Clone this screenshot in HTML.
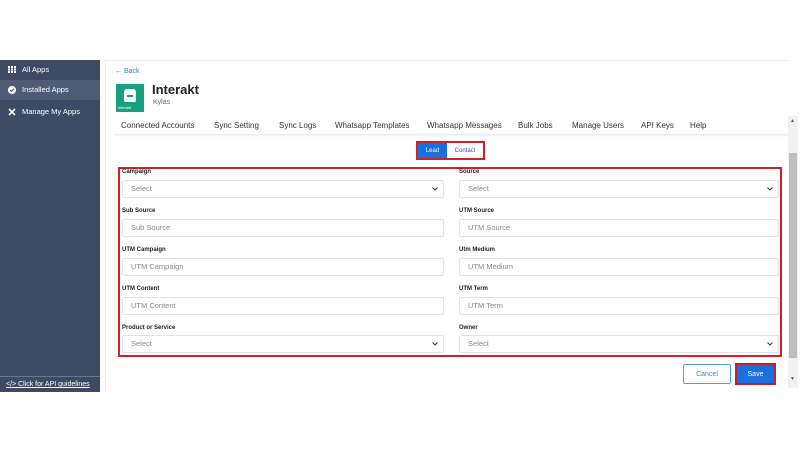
<!DOCTYPE html>
<html><head><style>
*{box-sizing:border-box;margin:0;padding:0}
body{width:800px;height:450px;background:#fff;position:relative;font-family:"Liberation Sans",sans-serif;overflow:hidden}
.a{position:absolute}
.side{left:0;top:60px;width:100px;height:332px;background:#3e4a64}
.si{position:absolute;left:0;width:100px;height:20px;color:#fff;font-size:7.5px;padding-left:22px;line-height:20px}
.si svg{position:absolute;left:8px;top:6px}
.main{left:105px;top:60px;width:683px;height:332px;border-left:1px solid #eee;border-top:1px solid #eee}
.tab{position:absolute;top:121px;font-size:8px;color:#333}
.lbl{position:absolute;font-size:6px;font-weight:bold;color:#222}
.inp{position:absolute;height:18px;border:1px solid #e3e3e3;border-radius:2px;font-size:7.5px;color:#888;padding-left:8px;line-height:16px;background:#fff}
.chev{position:absolute;right:5px;top:6px;width:6px;height:4px}
.btn{display:flex;align-items:center;justify-content:center}
</style></head><body>
<div class="a side">
 <div class="si" style="top:0"><svg width="8" height="7"><g fill="#fff"><rect x="0" y="0" width="2" height="2"/><rect x="3" y="0" width="2" height="2"/><rect x="6" y="0" width="2" height="2"/><rect x="0" y="2.5" width="2" height="2"/><rect x="3" y="2.5" width="2" height="2"/><rect x="6" y="2.5" width="2" height="2"/><rect x="0" y="5" width="2" height="2"/><rect x="3" y="5" width="2" height="2"/><rect x="6" y="5" width="2" height="2"/></g></svg>All Apps</div>
 <div class="si" style="top:20px;background:#4f5b74"><svg width="8" height="8"><circle cx="4" cy="4" r="4" fill="#fff"/><path d="M2.2 4l1.3 1.3L6 2.8" stroke="#4f5b74" stroke-width="1.2" fill="none"/></svg>Installed Apps</div>
 <div class="si" style="top:42px"><svg width="8" height="8"><path d="M1 1l6 6M7 1L1 7" stroke="#fff" stroke-width="1.6"/></svg>Manage My Apps</div>
 <div class="a" style="left:0;top:316px;width:100px;border-top:1px solid #6a7590"></div>
 <div class="a" style="left:6px;top:321px;font-size:7px;color:#fff;text-decoration:underline">&lt;/&gt; Click for API guidelines</div>
</div>
<div class="a main"></div>
<div class="a" style="left:115px;top:68px;font-size:7px;color:#3a7bd5">← Back</div>
<div class="a" style="left:116px;top:84px;width:28px;height:28px;background:#18a07e">
 <div class="a" style="left:8px;top:5px;width:12px;height:13px;background:#fff;border-radius:3px 3px 2px 2px"></div>
 <div class="a" style="left:11px;top:11px;width:6px;height:2px;background:#18a07e"></div>
 <div class="a" style="left:2px;top:21px;font-size:4px;color:#fff">interakt</div>
</div>
<div class="a" style="left:152px;top:82px;font-size:13px;font-weight:bold;color:#222">Interakt</div>
<div class="a" style="left:153px;top:99px;font-size:7px;color:#666">Kylas</div>
<div class="tab" style="left:121px">Connected Accounts</div>
<div class="tab" style="left:214px">Sync Setting</div>
<div class="tab" style="left:279px">Sync Logs</div>
<div class="tab" style="left:335px">Whatsapp Templates</div>
<div class="tab" style="left:427px">Whatsapp Messages</div>
<div class="tab" style="left:518px">Bulk Jobs</div>
<div class="tab" style="left:572px">Manage Users</div>
<div class="tab" style="left:641px">API Keys</div>
<div class="tab" style="left:690px">Help</div>
<div class="a" style="left:115px;top:134px;width:673px;height:3px;background:linear-gradient(#e8e8e8,#fff)"></div>
<div class="a" style="left:416px;top:141px;width:69px;height:19px;border:2px solid #d0202a;background:#fff"></div>
<div class="a btn" style="left:418px;top:143px;width:29px;height:15px;background:#1a6fe0;color:#fff;font-size:6px">Lead</div>
<div class="a btn" style="left:447px;top:143px;width:36px;height:15px;color:#3a4bb8;font-size:6px">Contact</div>
<div class="a" style="left:118px;top:167px;width:664px;height:190px;border:2px solid #d0202a"></div>

<div class="lbl" style="left:122px;top:169px">Campaign</div>
<div class="inp" style="left:122px;top:180px;width:322px">Select<svg class="chev" viewBox="0 0 6 4"><path d="M.5.5L3 3 5.5.5" stroke="#333" stroke-width="1" fill="none"/></svg></div>
<div class="lbl" style="left:459px;top:169px">Source</div>
<div class="inp" style="left:459px;top:180px;width:320px">Select<svg class="chev" viewBox="0 0 6 4"><path d="M.5.5L3 3 5.5.5" stroke="#333" stroke-width="1" fill="none"/></svg></div>

<div class="lbl" style="left:122px;top:208px">Sub Source</div>
<div class="inp" style="left:122px;top:219px;width:322px">Sub Source</div>
<div class="lbl" style="left:459px;top:208px">UTM Source</div>
<div class="inp" style="left:459px;top:219px;width:320px">UTM Source</div>

<div class="lbl" style="left:122px;top:247px">UTM Campaign</div>
<div class="inp" style="left:122px;top:258px;width:322px">UTM Campaign</div>
<div class="lbl" style="left:459px;top:247px">Utm Medium</div>
<div class="inp" style="left:459px;top:258px;width:320px">UTM Medium</div>

<div class="lbl" style="left:122px;top:286px">UTM Content</div>
<div class="inp" style="left:122px;top:297px;width:322px">UTM Content</div>
<div class="lbl" style="left:459px;top:286px">UTM Term</div>
<div class="inp" style="left:459px;top:297px;width:320px">UTM Term</div>

<div class="lbl" style="left:122px;top:325px">Product or Service</div>
<div class="inp" style="left:122px;top:335px;width:322px">Select<svg class="chev" viewBox="0 0 6 4"><path d="M.5.5L3 3 5.5.5" stroke="#333" stroke-width="1" fill="none"/></svg></div>
<div class="lbl" style="left:459px;top:325px">Owner</div>
<div class="inp" style="left:459px;top:335px;width:320px">Select<svg class="chev" viewBox="0 0 6 4"><path d="M.5.5L3 3 5.5.5" stroke="#333" stroke-width="1" fill="none"/></svg></div>

<div class="a btn" style="left:683px;top:364px;width:48px;height:20px;border:1px solid #5aa0d8;border-radius:2px;font-size:7px;color:#4a7fc0">Cancel</div>
<div class="a btn" style="left:735px;top:363px;width:41px;height:22px;border:2px solid #c0202a;background:#1a6fe0;font-size:7px;color:#fff">Save</div>
<div class="a" style="left:788px;top:116px;width:10px;height:272px;background:#f1f1f1"></div>
<div class="a" style="left:789px;top:153px;width:8px;height:205px;background:#bdbdbd"></div>
<div class="a" style="left:790px;top:118px;font-size:5px;color:#555">▲</div>
<div class="a" style="left:790px;top:376px;font-size:5px;color:#555">▼</div>
</body></html>
